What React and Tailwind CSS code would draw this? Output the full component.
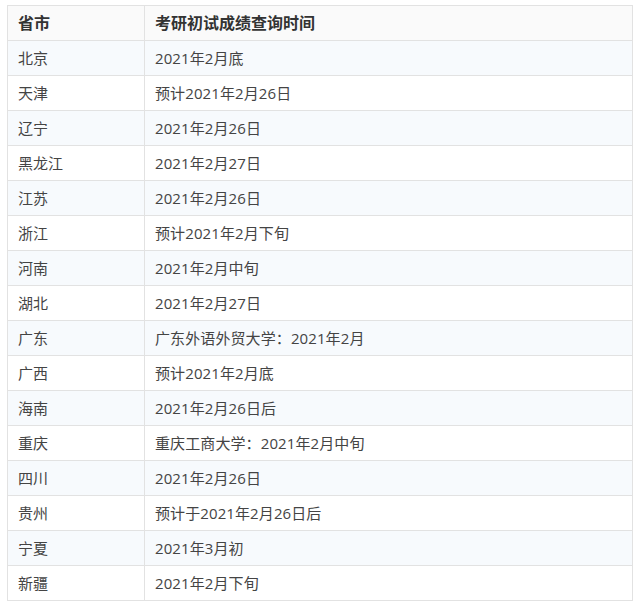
const rows = [
  ['北京', '2021年2月底'],
  ['天津', '预计2021年2月26日'],
  ['辽宁', '2021年2月26日'],
  ['黑龙江', '2021年2月27日'],
  ['江苏', '2021年2月26日'],
  ['浙江', '预计2021年2月下旬'],
  ['河南', '2021年2月中旬'],
  ['湖北', '2021年2月27日'],
  ['广东', '广东外语外贸大学：2021年2月'],
  ['广西', '预计2021年2月底'],
  ['海南', '2021年2月26日后'],
  ['重庆', '重庆工商大学：2021年2月中旬'],
  ['四川', '2021年2月26日'],
  ['贵州', '预计于2021年2月26日后'],
  ['宁夏', '2021年3月初'],
  ['新疆', '2021年2月下旬'],
]

export default function App() {
  return (
    <div
      className="h-[610px] w-[640px] bg-white pl-[7px] pt-[5px]"
      style={{ fontFamily: '"Open Sans", "Noto Sans CJK SC", sans-serif' }}
    >
      <table className="w-[626px] border-collapse text-[15px] text-[#333]">
        <thead>
          <tr className="h-[35px] bg-[#fafafa] text-[16px]">
            <th className="w-[137px] border border-[#e2e2e2] px-[10px] text-left font-bold">省市</th>
            <th className="border border-[#e2e2e2] px-[10px] text-left font-bold">考研初试成绩查询时间</th>
          </tr>
        </thead>
        <tbody>
          {rows.map(([a, b], i) => (
            <tr key={a} className={i % 2 === 0 ? 'h-[35px] bg-[#f7fafd]' : 'h-[35px] bg-white'}>
              <td className="border border-[#e2e2e2] px-[10px] text-[#444]">{a}</td>
              <td className="border border-[#e2e2e2] px-[10px] tracking-[0.1px] text-[#444]">{b}</td>
            </tr>
          ))}
        </tbody>
      </table>
    </div>
  )
}
